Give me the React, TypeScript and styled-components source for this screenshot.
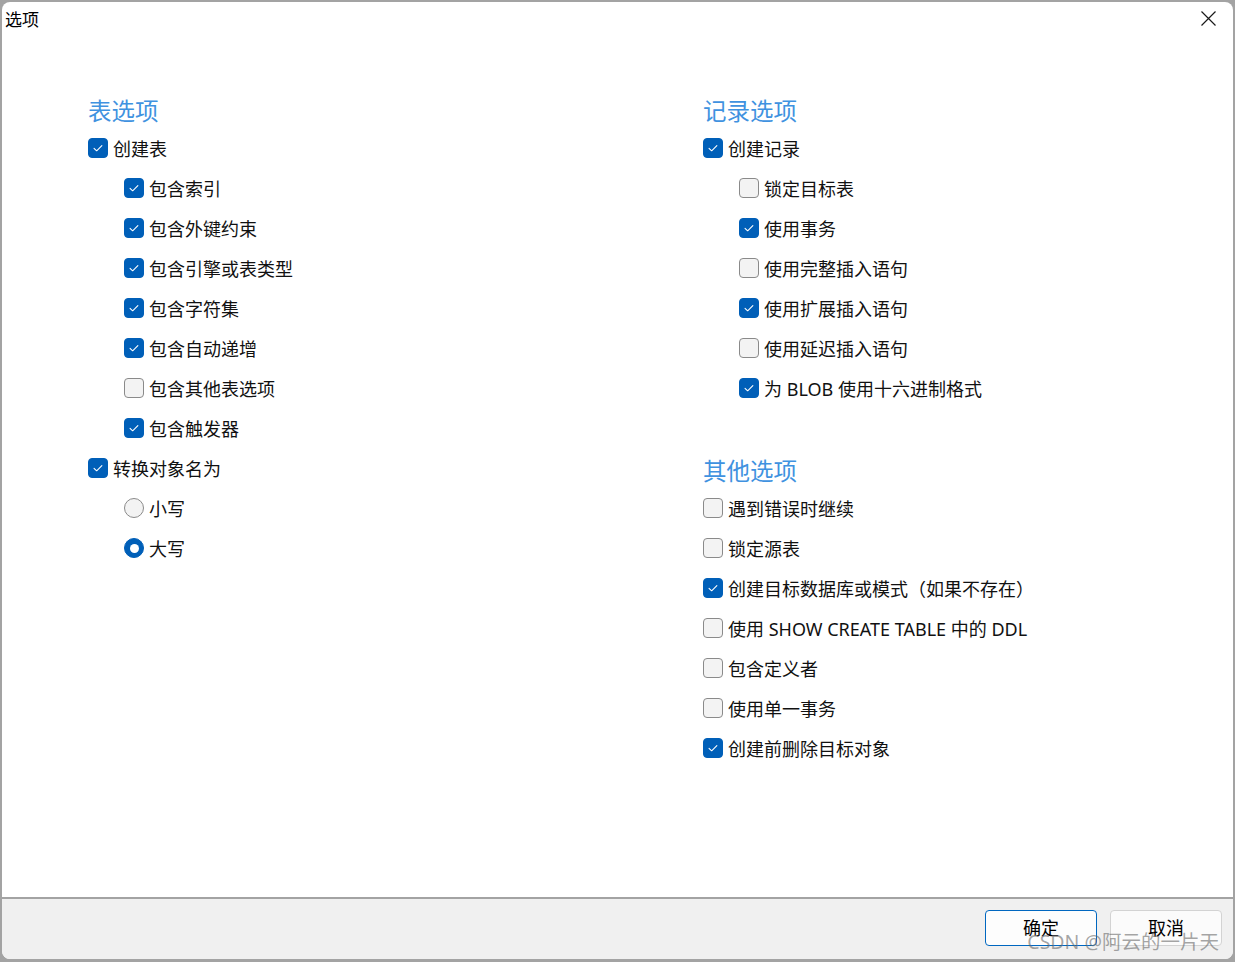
import styled, { createGlobalStyle } from "styled-components";

const GlobalStyle = createGlobalStyle`
  html, body {
    margin: 0;
    padding: 0;
    background: #a3a3a3;
  }
  body {
    font-family: "Noto Sans", "Noto Sans CJK SC", sans-serif;
    color: #1a1a1a;
  }
  * {
    box-sizing: border-box;
  }
`;

type Item = {
  label: string;
  checked?: boolean;
  nested?: boolean;
  radio?: boolean;
};

const tableOptions: Item[] = [
  { label: "创建表", checked: true },
  { label: "包含索引", checked: true, nested: true },
  { label: "包含外键约束", checked: true, nested: true },
  { label: "包含引擎或表类型", checked: true, nested: true },
  { label: "包含字符集", checked: true, nested: true },
  { label: "包含自动递增", checked: true, nested: true },
  { label: "包含其他表选项", nested: true },
  { label: "包含触发器", checked: true, nested: true },
  { label: "转换对象名为", checked: true },
  { label: "小写", nested: true, radio: true },
  { label: "大写", checked: true, nested: true, radio: true },
];

const recordOptions: Item[] = [
  { label: "创建记录", checked: true },
  { label: "锁定目标表", nested: true },
  { label: "使用事务", checked: true, nested: true },
  { label: "使用完整插入语句", nested: true },
  { label: "使用扩展插入语句", checked: true, nested: true },
  { label: "使用延迟插入语句", nested: true },
  { label: "为 BLOB 使用十六进制格式", checked: true, nested: true },
];

const otherOptions: Item[] = [
  { label: "遇到错误时继续" },
  { label: "锁定源表" },
  { label: "创建目标数据库或模式（如果不存在）", checked: true },
  { label: "使用 SHOW CREATE TABLE 中的 DDL" },
  { label: "包含定义者" },
  { label: "使用单一事务" },
  { label: "创建前删除目标对象", checked: true },
];

const Window = styled.div`
  position: relative;
  margin: 2px 2px 0 2px;
  height: 957px;
  border-radius: 8px;
  overflow: hidden;
  display: flex;
  flex-direction: column;
  background: #ffffff;
`;

const TitleBar = styled.div`
  height: 33px;
  flex-shrink: 0;
  display: flex;
  align-items: center;
  justify-content: space-between;
  padding: 0 17px 0 3px;
`;

const Title = styled.span`
  font-size: 17px;
  color: #000;
`;

const CloseButton = styled.button`
  border: none;
  background: none;
  padding: 0;
  width: 15px;
  height: 15px;
  display: flex;
  cursor: pointer;
`;

const Content = styled.div`
  flex: 1;
  display: grid;
  grid-template-columns: 615px 1fr;
  align-items: start;
  padding: 57px 0 0 86px;
  border-bottom: 2px solid #a3a3a3;
`;

const Column = styled.div`
  display: flex;
  flex-direction: column;
`;

const SectionTitle = styled.div<{ $spaced?: boolean }>`
  height: 36px;
  display: flex;
  align-items: center;
  font-size: 23.5px;
  color: #3f92e0;
  margin-top: ${(p) => (p.$spaced ? "44px" : "0")};
`;

const Row = styled.label<{ $nested?: boolean }>`
  height: 40px;
  display: flex;
  align-items: center;
  gap: 5px;
  padding-left: ${(p) => (p.$nested ? "36px" : "0")};
  font-size: 18px;
  color: #111;
  cursor: default;
`;

const Box = styled.span<{ $checked?: boolean; $radio?: boolean }>`
  width: 20px;
  height: 20px;
  flex-shrink: 0;
  display: flex;
  align-items: center;
  justify-content: center;
  border-radius: ${(p) => (p.$radio ? "50%" : "4px")};
  background: ${(p) => (p.$checked ? "#005fb8" : "#f3f3f3")};
  border: 1px solid ${(p) => (p.$checked ? "#005fb8" : "#8a8a8a")};
`;

const Dot = styled.span`
  width: 9px;
  height: 9px;
  border-radius: 50%;
  background: #fff;
`;

const Footer = styled.div`
  height: 60px;
  flex-shrink: 0;
  background: #f0f0f0;
  display: flex;
  justify-content: flex-end;
  align-items: flex-start;
  gap: 13px;
  padding: 11px 11px 0 0;
`;

const Button = styled.button<{ $primary?: boolean }>`
  width: 112px;
  height: 36px;
  border-radius: 4px;
  font-family: inherit;
  font-size: 18px;
  line-height: 1;
  color: #000;
  background: ${(p) => (p.$primary ? "#fdfdfd" : "#fbfbfb")};
  border: 1px solid ${(p) => (p.$primary ? "#0067c0" : "#d3d3d3")};
  padding: 0;
`;

const Watermark = styled.span`
  position: absolute;
  right: 14px;
  bottom: 4px;
  font-size: 19.5px;
  color: rgba(105, 105, 105, 0.6);
  pointer-events: none;
`;

const Check = () => (
  <svg width="20" height="20" viewBox="0 0 20 20">
    <path d="M5.6 10.3 L8.5 13.1 L14.3 7.3" fill="none" stroke="#fff" strokeWidth="1.2" strokeLinecap="round" strokeLinejoin="round" />
  </svg>
);

const Option = ({ label, checked, nested, radio }: Item) => (
  <Row $nested={nested}>
    <Box $checked={checked} $radio={radio}>
      {checked && (radio ? <Dot /> : <Check />)}
    </Box>
    {label}
  </Row>
);

const App = () => {
  return (
    <>
      <GlobalStyle />
      <Window>
        <TitleBar>
          <Title>选项</Title>
          <CloseButton title="关闭">
            <svg width="15" height="15" viewBox="0 0 15 15">
              <path d="M0.5 0.5 L14.5 14.5 M14.5 0.5 L0.5 14.5" stroke="#1a1a1a" strokeWidth="1.2" />
            </svg>
          </CloseButton>
        </TitleBar>
        <Content>
          <Column>
            <SectionTitle>表选项</SectionTitle>
            {tableOptions.map((o) => (
              <Option key={o.label} {...o} />
            ))}
          </Column>
          <Column>
            <SectionTitle>记录选项</SectionTitle>
            {recordOptions.map((o) => (
              <Option key={o.label} {...o} />
            ))}
            <SectionTitle $spaced>其他选项</SectionTitle>
            {otherOptions.map((o) => (
              <Option key={o.label} {...o} />
            ))}
          </Column>
        </Content>
        <Footer>
          <Button $primary>确定</Button>
          <Button>取消</Button>
        </Footer>
        <Watermark>CSDN @阿云的一片天</Watermark>
      </Window>
    </>
  );
};

export default App;
